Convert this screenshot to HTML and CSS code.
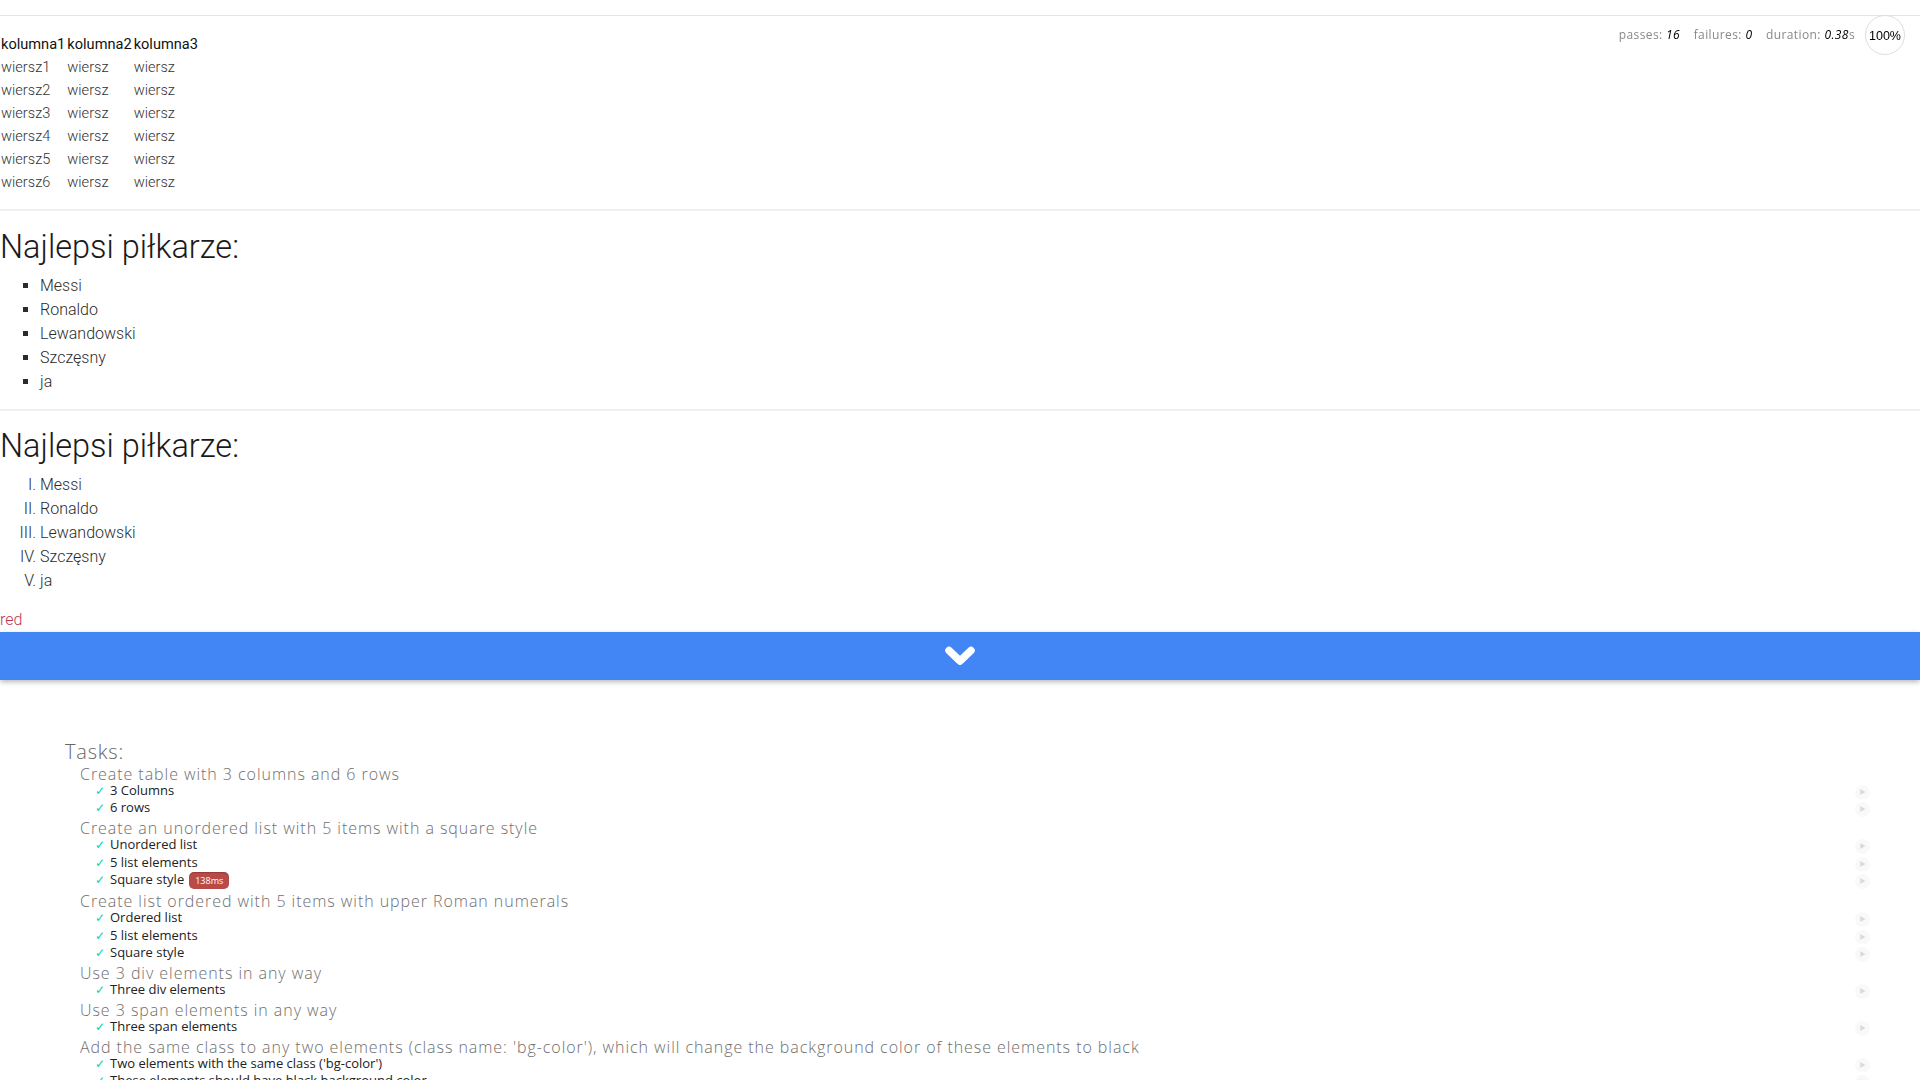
FILE: index.html
```html
<!DOCTYPE html>
<html lang="pl">
<head>
<meta charset="utf-8">
<title>Zadanie</title>
<link rel="stylesheet" href="styles.css">
</head>
<body>
<div class="sec sec-table">
  <table class="grid">
    <tr><th>kolumna1</th><th>kolumna2</th><th>kolumna3</th></tr>
    <tr><td>wiersz1</td><td>wiersz</td><td>wiersz</td></tr>
    <tr><td>wiersz2</td><td>wiersz</td><td>wiersz</td></tr>
    <tr><td>wiersz3</td><td>wiersz</td><td>wiersz</td></tr>
    <tr><td>wiersz4</td><td>wiersz</td><td>wiersz</td></tr>
    <tr><td>wiersz5</td><td>wiersz</td><td>wiersz</td></tr>
    <tr><td>wiersz6</td><td>wiersz</td><td>wiersz</td></tr>
  </table>
</div>
<div class="sec sec-list">
  <h1 class="title">Najlepsi piłkarze:</h1>
  <ul class="square">
    <li>Messi</li>
    <li>Ronaldo</li>
    <li>Lewandowski</li>
    <li>Szczęsny</li>
    <li>ja</li>
  </ul>
</div>
<div class="sec sec-list sec-last">
  <h1 class="title">Najlepsi piłkarze:</h1>
  <ol class="roman">
    <li>Messi</li>
    <li>Ronaldo</li>
    <li>Lewandowski</li>
    <li>Szczęsny</li>
    <li>ja</li>
  </ol>
</div>
<div class="red-line"><span class="red">red</span></div>
<div class="toggle-bar">
  <svg class="chevron" width="30" height="22" viewBox="0 0 30 22"><path d="M4 5.5 L15 16 L26 5.5" fill="none" stroke="#fff" stroke-width="7.5" stroke-linecap="round" stroke-linejoin="round"/></svg>
</div>

<ul class="mocha-stats">
  <li class="progress"><div class="ring">100%</div></li>
  <li class="stat">passes: <em>16</em></li>
  <li class="stat">failures: <em>0</em></li>
  <li class="stat">duration: <em>0.38</em>s</li>
</ul>

<div class="mocha">
  <ul class="report">
    <li class="suite">
      <h1 class="suite-title top">Tasks:</h1>
      <ul>
        <li class="suite">
          <h1 class="suite-title">Create table with 3 columns and 6 rows</h1>
          <ul>
            <li class="test"><h2>3 Columns<a class="replay" href="#">‣</a></h2></li>
            <li class="test"><h2>6 rows<a class="replay" href="#">‣</a></h2></li>
          </ul>
        </li>
        <li class="suite">
          <h1 class="suite-title">Create an unordered list with 5 items with a square style</h1>
          <ul>
            <li class="test"><h2>Unordered list<a class="replay" href="#">‣</a></h2></li>
            <li class="test"><h2>5 list elements<a class="replay" href="#">‣</a></h2></li>
            <li class="test"><h2>Square style<span class="duration">138ms</span><a class="replay" href="#">‣</a></h2></li>
          </ul>
        </li>
        <li class="suite">
          <h1 class="suite-title">Create list ordered with 5 items with upper Roman numerals</h1>
          <ul>
            <li class="test"><h2>Ordered list<a class="replay" href="#">‣</a></h2></li>
            <li class="test"><h2>5 list elements<a class="replay" href="#">‣</a></h2></li>
            <li class="test"><h2>Square style<a class="replay" href="#">‣</a></h2></li>
          </ul>
        </li>
        <li class="suite">
          <h1 class="suite-title">Use 3 div elements in any way</h1>
          <ul>
            <li class="test"><h2>Three div elements<a class="replay" href="#">‣</a></h2></li>
          </ul>
        </li>
        <li class="suite">
          <h1 class="suite-title">Use 3 span elements in any way</h1>
          <ul>
            <li class="test"><h2>Three span elements<a class="replay" href="#">‣</a></h2></li>
          </ul>
        </li>
        <li class="suite">
          <h1 class="suite-title">Add the same class to any two elements (class name: 'bg-color'), which will change the background color of these elements to black</h1>
          <ul>
            <li class="test"><h2>Two elements with the same class ('bg-color')<a class="replay" href="#">‣</a></h2></li>
            <li class="test"><h2>These elements should have black background color<a class="replay" href="#">‣</a></h2></li>
          </ul>
        </li>
      </ul>
    </li>
  </ul>
</div>
</body>
</html>
```
FILE: styles.css
```css
html, body {
  margin: 0;
  padding: 0;
  background: #fff;
}
body {
  font-family: "Roboto Light", Roboto, "Liberation Sans", sans-serif;
  font-weight: 300;
  color: #2b2b2b;
}

.sec {
  border-top: 2px solid #efefef;
}
.sec-table {
  margin-top: 15px;
  padding: 15.5px 0 14px;
  border-top: 1px solid #e4e4e4;
}
.grid {
  border-collapse: separate;
  border-spacing: 0 2px;
  font-size: 14.6px;
}
.grid th, .grid td {
  padding: 1px 1px;
  line-height: 19px;
  text-align: left;
  vertical-align: middle;
}
.grid th {
  font-family: Roboto, "Liberation Sans", sans-serif;
  font-weight: 400;
  color: #111;
}
.grid td {
  font-weight: 300;
  color: #333;
}

.sec-list {
  padding: 17px 0 15px;
}
.sec-last {
  padding: 16px 0 0;
}
.title {
  margin: 0;
  font-size: 32.5px;
  line-height: 38px;
  font-weight: 300;
  color: #1a1a1a;
}
.square, .roman {
  margin: 8px 0 0;
  padding-left: 40px;
  font-size: 16px;
}
.square li, .roman li {
  line-height: 24px;
}
.square { list-style: square; }
.roman { list-style: upper-roman; }

.red-line {
  margin-top: 15px;
  line-height: 24px;
  font-size: 16px;
}
.red {
  color: #b8394f;
}

.toggle-bar {
  height: 48px;
  background: #4285f4;
  display: flex;
  align-items: center;
  justify-content: center;
  box-shadow: 0 2px 5px rgba(0, 0, 0, 0.28);
}
.chevron {
  display: block;
}

/* mocha stats */
.mocha-stats {
  position: fixed;
  top: 15px;
  right: 10px;
  margin: 0;
  padding: 0;
  font-family: "Open Sans", "DejaVu Sans", sans-serif;
  font-weight: 400;
  font-size: 12px;
  letter-spacing: 0.4px;
  color: #888;
  z-index: 1;
}
.mocha-stats li {
  display: inline-block;
  margin: 0 5px;
  list-style: none;
  padding-top: 11px;
  line-height: 18px;
}
.mocha-stats em {
  color: #000;
}
.mocha-stats .progress {
  float: right;
  padding-top: 0;
  width: 40px;
  height: 40px;
}
.ring {
  box-sizing: border-box;
  width: 40px;
  height: 40px;
  border: 1.5px solid #dddddd;
  border-radius: 50%;
  display: flex;
  align-items: center;
  justify-content: center;
  font-family: "Liberation Sans", sans-serif;
  font-size: 12.5px;
  letter-spacing: 0;
  color: #000;
  padding-top: 2px;
}

/* mocha report */
.mocha {
  margin: 61px 50px 60px;
  font-family: "Open Sans", "DejaVu Sans", sans-serif;
}
.mocha ul {
  list-style: none;
  margin: 0;
  padding: 0;
}
.mocha .suite {
  margin-left: 15px;
}
.suite-title {
  margin: 3px 0 0;
  font-size: 16px;
  line-height: 16px;
  font-weight: 300;
  letter-spacing: 0.95px;
  color: #6e6e6e;
  white-space: nowrap;
}
.suite-title.top {
  margin: 0;
  font-size: 20px;
  line-height: 22px;
  letter-spacing: 0.8px;
  color: #666;
}
.mocha .test {
  margin-left: 15px;
  overflow: hidden;
  line-height: 17.7px;
}
.mocha .test::before {
  content: "✓";
  font-size: 12px;
  display: block;
  float: left;
  margin-right: 5px;
  color: #00d6b2;
  line-height: 17.7px;
}
.mocha .test h2 {
  position: relative;
  margin: 0;
  font-size: 13px;
  line-height: 17.7px;
  font-weight: 400;
  color: #222;
}
.duration {
  font-size: 9px;
  margin-left: 5px;
  padding: 2px 6px;
  color: #fff;
  background: #b94a48;
  border-radius: 5px;
  box-shadow: inset 0 1px 1px rgba(0, 0, 0, 0.2);
}
.replay {
  position: absolute;
  top: 3px;
  right: 0;
  display: block;
  width: 15px;
  height: 15px;
  line-height: 15px;
  text-align: center;
  text-decoration: none;
  background: #eee;
  font-size: 15px;
  border-radius: 15px;
  opacity: 0.3;
  color: #888;
}
```
